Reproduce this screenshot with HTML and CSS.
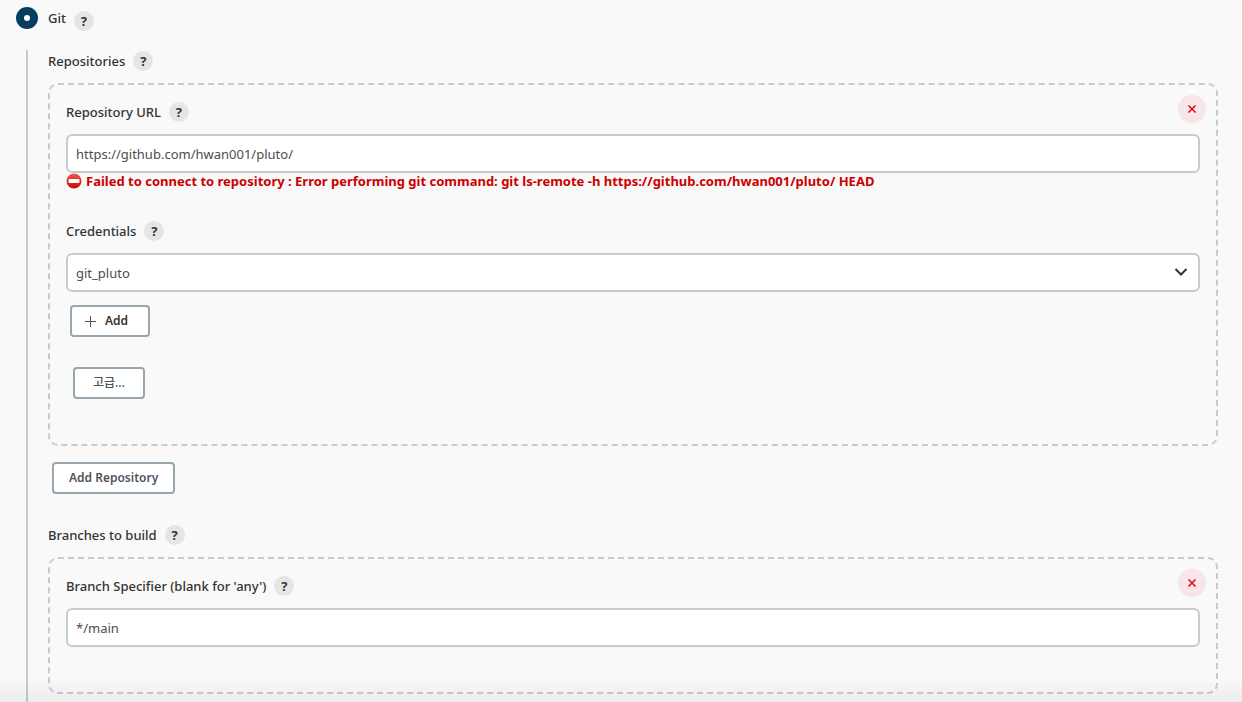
FILE: index.html
```
<!DOCTYPE html>
<html lang="ko">

	<head>
		<meta charset="UTF-8">
		<title>Git</title>
		<link rel="stylesheet" href="styles.css">
	</head>

	<body>
		<form class="scm">
			<div class="scm-choice">
				<input type="radio" name="scm" id="scmGit" class="radio" checked>
				<label for="scmGit">Git</label>
				<button type="button" class="help help-low" aria-label="Git help">?</button>
			</div>

			<div class="scm-body">
				<!-- Repositories -->
				<div class="label-row">
					<span>Repositories</span>
					<button type="button" class="help" aria-label="Repositories help">?</button>
				</div>
				<div class="chunk">
					<div class="chunk-head">
						<div class="label-row">
							<label for="repoUrl">Repository URL</label>
							<button type="button" class="help" aria-label="Repository URL help">?</button>
						</div>
						<button type="button" class="delete" aria-label="Delete repository">
							<svg viewBox="0 0 8 8" width="8" height="8"><path d="M0.5 0.5L7.5 7.5M7.5 0.5L0.5 7.5" /></svg>
						</button>
					</div>
					<input type="text" id="repoUrl" class="field" value="https://github.com/hwan001/pluto/">
					<div class="error">
						<svg viewBox="0 0 16 16" width="16" height="16">
							<defs>
								<linearGradient id="stopFill" x1="0" y1="0" x2="0" y2="1">
									<stop offset="0" stop-color="#f4574e" />
									<stop offset="0.5" stop-color="#e22c27" />
									<stop offset="1" stop-color="#c00d0d" />
								</linearGradient>
							</defs>
							<circle cx="8" cy="8" r="7.5" fill="url(#stopFill)" />
							<rect x="2.5" y="6" width="11" height="4" rx="1" fill="#fff" />
						</svg>
						<span>Failed to connect to repository : Error performing git command: git ls-remote -h https://github.com/hwan001/pluto/ HEAD</span>
					</div>

					<div class="label-row credentials-label">
						<label for="credentials">Credentials</label>
						<button type="button" class="help" aria-label="Credentials help">?</button>
					</div>
					<div class="select">
						<select id="credentials" class="field">
							<option>git_pluto</option>
						</select>
						<svg class="arrow" viewBox="0 0 14 8" width="14" height="8"><path d="M1.5 1L7 6.5L12.5 1" /></svg>
					</div>
					<button type="button" class="btn btn-add">
						<svg viewBox="0 0 11 11" width="11" height="11"><path d="M5.5 0V11M0 5.5H11" /></svg>
						Add
					</button>
					<button type="button" class="btn btn-advanced">고급...</button>
				</div>
				<button type="button" class="btn btn-repo">Add Repository</button>

				<!-- Branches -->
				<div class="label-row">
					<span>Branches to build</span>
					<button type="button" class="help" aria-label="Branches to build help">?</button>
				</div>
				<div class="chunk">
					<div class="chunk-head">
						<div class="label-row">
							<label for="branch">Branch Specifier (blank for 'any')</label>
							<button type="button" class="help" aria-label="Branch Specifier help">?</button>
						</div>
						<button type="button" class="delete" aria-label="Delete branch">
							<svg viewBox="0 0 8 8" width="8" height="8"><path d="M0.5 0.5L7.5 7.5M7.5 0.5L0.5 7.5" /></svg>
						</button>
					</div>
					<input type="text" id="branch" class="field" value="*/main">
				</div>
			</div>
		</form>
		<div class="bottom-shade"></div>
	</body>

</html>
```
FILE: styles.css
```
* {
	box-sizing: border-box;
}

body {
	margin: 0;
	background: #f9f9f9;
	color: #333;
	font-family: "Noto Sans", "Noto Sans CJK KR", sans-serif;
	font-size: 13px;
	font-weight: 500;
	line-height: 20px;
}

button,
input,
select {
	margin: 0;
	font: inherit;
	color: inherit;
}

.scm {
	display: flex;
	flex-direction: column;
	height: 100vh;
	padding: 7px 24px 0 16px;
	overflow: hidden;
}

.scm-choice {
	display: flex;
	align-items: center;
	height: 22px;
}

.radio {
	appearance: none;
	width: 22px;
	height: 22px;
	margin-right: 10px;
	border: 8px solid #063e62;
	border-radius: 50%;
	background: #fff;
}

.help {
	width: 20px;
	height: 20px;
	padding: 0;
	border: 0;
	border-radius: 50%;
	background: #e5e5e5;
	font-weight: 700;
	line-height: 20px;
}

.help-low {
	align-self: flex-start;
	margin: 4px 0 0 8px;
}

/* 왼쪽 세로선 */
.scm-body {
	flex: 1 0 auto;
	margin: 21px 0 0 10px;
	padding: 1px 0 7px 20px;
	border-left: 2px solid #c3cdd1;
}

.label-row {
	display: flex;
	align-items: center;
	gap: 8px;
	height: 20px;
}

.chunk {
	margin-top: 12px;
	padding: 10px 16px 45px;
	border: 2px dashed #c3cdd1;
	border-radius: 10px;
}

.chunk-head {
	display: flex;
	justify-content: space-between;
	align-items: flex-start;
	margin-bottom: 11px;
}

.chunk-head .label-row {
	margin-top: 7px;
}

.delete {
	display: flex;
	align-items: center;
	justify-content: center;
	width: 28px;
	height: 28px;
	margin-right: -6px;
	padding: 0;
	border: 0;
	border-radius: 50%;
	background: #f7e5e7;
}

.delete svg {
	fill: none;
	stroke: #e6001f;
	stroke-width: 1.5;
}

.field {
	display: block;
	width: 100%;
	height: 39px;
	padding: 0 8px;
	border: 2px solid #c3cdd1;
	border-radius: 6px;
	background: #fff;
	color: #4d4d4d;
	font-weight: 400;
}

.error {
	display: flex;
	align-items: center;
	gap: 4px;
	height: 16px;
	color: #c00;
	font-weight: 700;
}

.credentials-label {
	margin: 32px 0 12px;
}

.select {
	position: relative;
}

.select .field {
	appearance: none;
}

.arrow {
	position: absolute;
	top: 15px;
	right: 12px;
	fill: none;
	stroke: #333;
	stroke-width: 2;
	pointer-events: none;
}

.btn {
	display: flex;
	align-items: center;
	justify-content: center;
	height: 32px;
	padding: 0 15px;
	border: 2px solid #98a6b0;
	border-radius: 4px;
	background: #fff;
	color: #4d545d;
	font-size: 12px;
	font-weight: 600;
}

.btn-add {
	gap: 9px;
	margin: 13px 0 0 4px;
	padding: 0 20px 0 13px;
	color: #333;
}

.btn-add svg {
	stroke: #555;
}

.btn-advanced {
	margin: 30px 0 0 7px;
	padding: 0 18px;
	font-weight: 500;
}

.btn-repo {
	margin: 16px 0 31px 4px;
}

.bottom-shade {
	position: fixed;
	right: 0;
	bottom: 0;
	left: 0;
	height: 24px;
	background: linear-gradient(rgba(0, 0, 0, 0), rgba(0, 0, 0, 0.05));
	pointer-events: none;
}
```
